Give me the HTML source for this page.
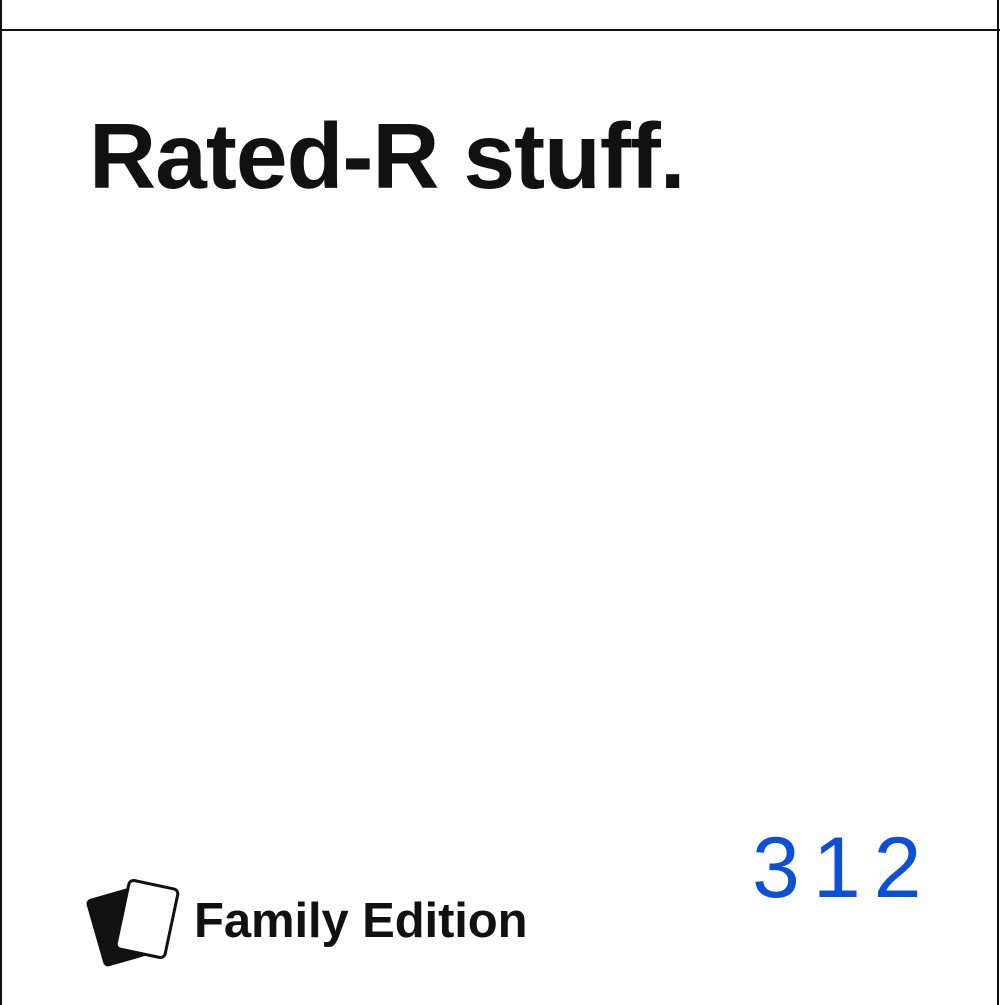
<!DOCTYPE html>
<html><head><style>
html,body{margin:0;padding:0;background:#fff;}
body{width:1000px;height:1005px;position:relative;overflow:hidden;font-family:"Liberation Sans",sans-serif;}
.l{position:absolute;background:#111;}
.t{position:absolute;left:89px;top:110px;font-size:93px;font-weight:bold;color:#111;letter-spacing:-1px;line-height:1;white-space:nowrap;}
.f{position:absolute;left:194px;top:897px;font-size:49px;font-weight:bold;color:#111;line-height:1;letter-spacing:-0.1px;white-space:nowrap;}
.n{position:absolute;left:752px;top:825px;font-size:86px;color:#0a50d8;line-height:1;letter-spacing:13px;}
</style></head><body>
<div class="l" style="left:0;top:0;width:2px;height:1005px"></div>
<div class="l" style="left:997px;top:0;width:2px;height:1005px"></div>
<div class="l" style="left:0;top:29px;width:1000px;height:2px"></div>
<div class="t">Rated-R stuff.</div>
<svg style="position:absolute;left:80px;top:870px" width="110" height="110" viewBox="0 0 110 110">
<rect x="14" y="22" width="50" height="70" rx="5" fill="#111" transform="rotate(-16 39 57)"/>
<rect x="42" y="14" width="50" height="70" rx="5" fill="#fff" stroke="#111" stroke-width="3" transform="rotate(12 67 49)"/>
</svg>
<div class="f">Family Edition</div>
<div class="n">312</div>
</body></html>
